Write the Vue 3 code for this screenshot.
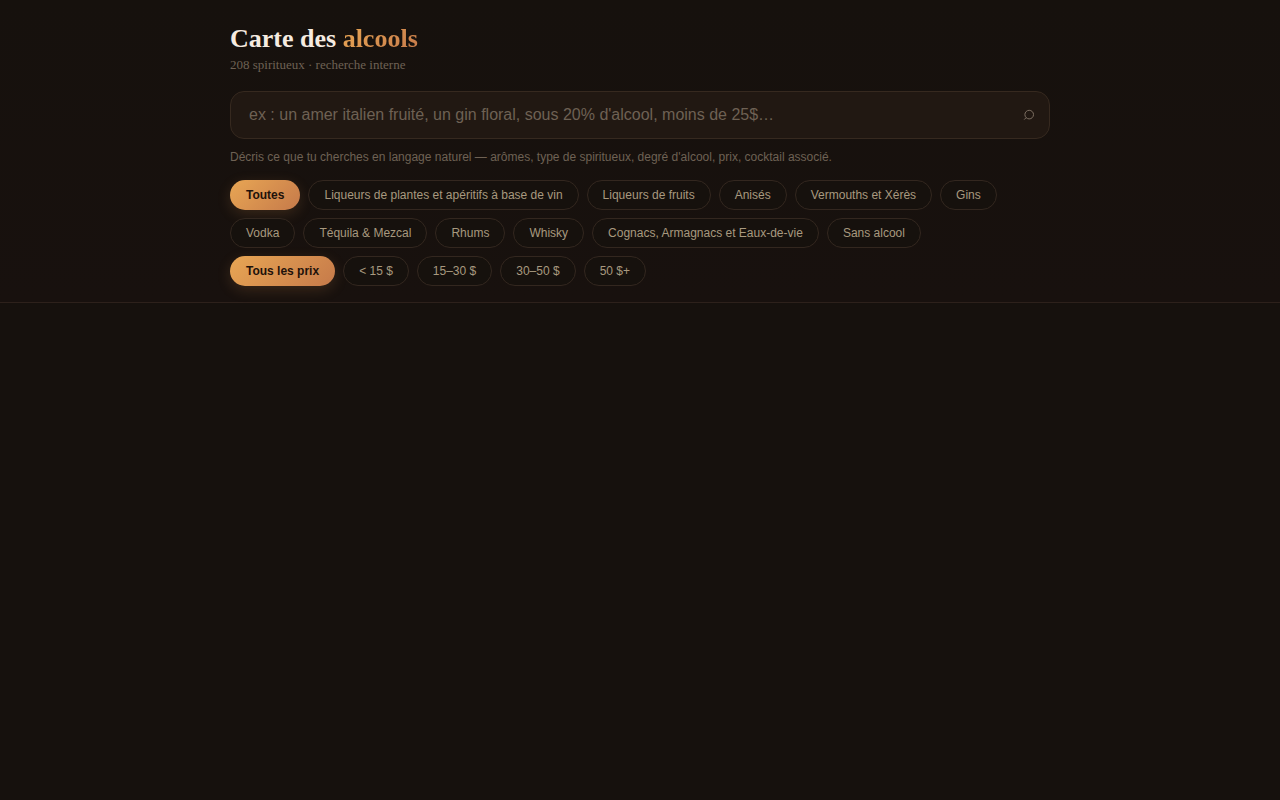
<script setup>
import { ref } from 'vue'

const query = ref('')
const category = ref('Toutes')
const price = ref('Tous les prix')

const categories = [
  'Toutes',
  'Liqueurs de plantes et apéritifs à base de vin',
  'Liqueurs de fruits',
  'Anisés',
  'Vermouths et Xérès',
  'Gins',
  'Vodka',
  'Téquila & Mezcal',
  'Rhums',
  'Whisky',
  'Cognacs, Armagnacs et Eaux-de-vie',
  'Sans alcool',
]
const prices = ['Tous les prix', '< 15 $', '15–30 $', '30–50 $', '50 $+']
</script>

<template>
  <header class="top">
    <div class="inner">
      <h1>Carte des <span class="accent">alcools</span></h1>
      <p class="subtitle">208 spiritueux · recherche interne</p>
      <div class="search">
        <input
          id="search"
          v-model="query"
          type="text"
          autocomplete="off"
          aria-label="Rechercher un spiritueux"
          placeholder="ex : un amer italien fruité, un gin floral, sous 20% d'alcool, moins de 25$…"
        />
        <svg class="glass" viewBox="0 0 12 12" aria-hidden="true">
          <circle cx="6.2" cy="5.6" r="4.3" />
          <path d="M3.2 8.6 1.2 10.6" />
        </svg>
      </div>
      <p class="hint">
        Décris ce que tu cherches en langage naturel — arômes, type de spiritueux, degré d'alcool, prix, cocktail associé.
      </p>
      <div class="chips" role="group" aria-label="Catégories">
        <button
          v-for="c in categories"
          :key="c"
          type="button"
          class="chip"
          :class="{ active: c === category }"
          :aria-pressed="c === category"
          @click="category = c"
        >{{ c }}</button>
      </div>
      <div class="chips" role="group" aria-label="Prix">
        <button
          v-for="p in prices"
          :key="p"
          type="button"
          class="chip"
          :class="{ active: p === price }"
          :aria-pressed="p === price"
          @click="price = p"
        >{{ p }}</button>
      </div>
    </div>
  </header>
</template>

<style>
body {
  margin: 0;
  background: #16110d;
}
</style>

<style scoped>
.top {
  padding: 24px 20px 16px;
  background: linear-gradient(180deg, #16110d, #18110e);
  border-bottom: 1px solid #2d211b;
  box-shadow: 0 12px 32px -12px rgba(0, 0, 0, 0.7);
  font-family: "Liberation Sans", Arial, sans-serif;
}

.inner {
  max-width: 820px;
  margin: 0 auto;
}

h1 {
  margin: 0;
  font: 700 26px/30px "Liberation Serif", "Times New Roman", serif;
  color: #f5ebe0;
}

.accent {
  color: transparent;
  background: linear-gradient(135deg, #e8a654, #c67a4a);
  -webkit-background-clip: text;
  background-clip: text;
}

.subtitle {
  margin: 3px 0 18px;
  font: 13px/16px "Liberation Serif", "Times New Roman", serif;
  color: #6e6154;
}

.search {
  position: relative;
}

.search input {
  display: block;
  box-sizing: border-box;
  width: 100%;
  height: 48px;
  padding: 0 48px 0 18px;
  border: 1px solid #36291f;
  border-radius: 14px;
  background: #211812;
  color: #f5ebe0;
  font: 16px "Liberation Sans", Arial, sans-serif;
  outline: none;
}

.search input:focus {
  border-color: #d9924e;
}

.search input::placeholder {
  color: #6e6154;
  opacity: 1;
}

.glass {
  position: absolute;
  top: 18px;
  right: 15px;
  width: 12px;
  height: 12px;
  fill: none;
  stroke: #7d6f62;
  stroke-width: 1;
  pointer-events: none;
}

.hint {
  margin: 10px 0 15px;
  font-size: 12px;
  line-height: 16px;
  color: #6e6154;
}

.chips {
  display: flex;
  flex-wrap: wrap;
  gap: 8px;
}

.chips + .chips {
  margin-top: 8px;
}

.chip {
  height: 30px;
  padding: 0 15px;
  border: 1px solid #33271f;
  border-radius: 15px;
  background: #16110d;
  color: #a8997f;
  font: 12px "Liberation Sans", Arial, sans-serif;
  white-space: nowrap;
  cursor: pointer;
}

.chip.active {
  border: 0;
  padding: 0 16px;
  background: linear-gradient(135deg, #e8a654, #c67a4a);
  color: #1f120a;
  font-weight: 700;
  box-shadow: 0 4px 14px rgba(217, 146, 78, 0.18);
}
</style>
